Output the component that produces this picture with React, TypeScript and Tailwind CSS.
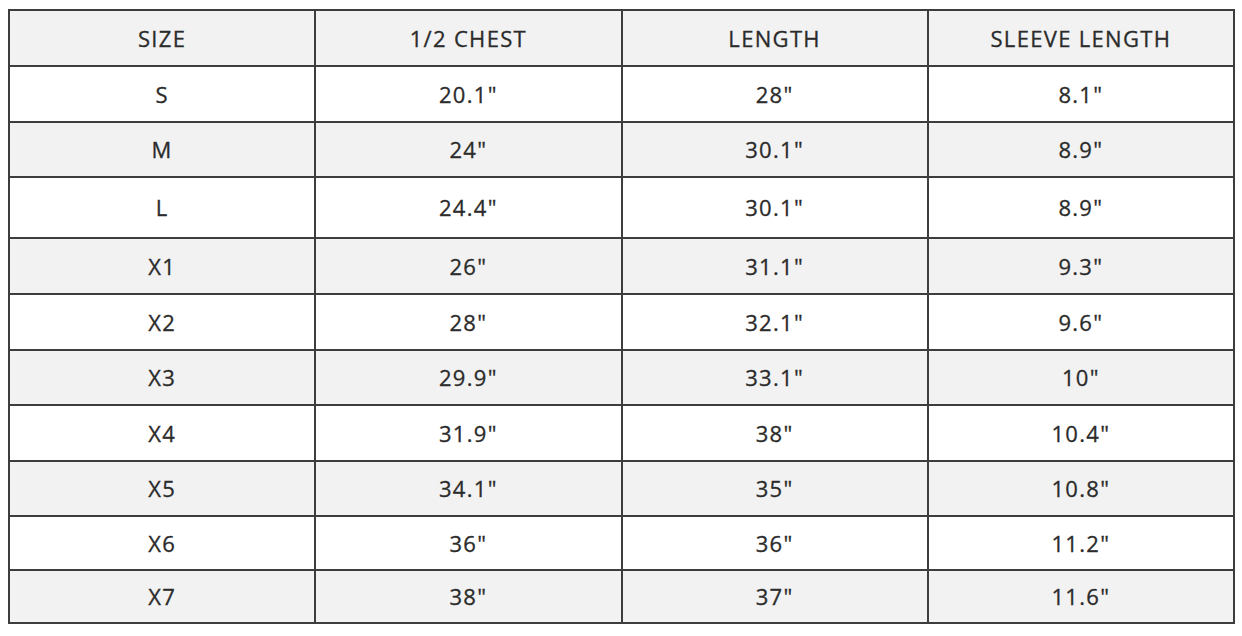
const headers = ["SIZE", "1/2 CHEST", "LENGTH", "SLEEVE LENGTH"];

const rows: { cells: string[]; h: string }[] = [
  { cells: ["S", '20.1"', '28"', '8.1"'], h: "h-[56px]" },
  { cells: ["M", '24"', '30.1"', '8.9"'], h: "h-[55px]" },
  { cells: ["L", '24.4"', '30.1"', '8.9"'], h: "h-[61px]" },
  { cells: ["X1", '26"', '31.1"', '9.3"'], h: "h-[56px]" },
  { cells: ["X2", '28"', '32.1"', '9.6"'], h: "h-[56px]" },
  { cells: ["X3", '29.9"', '33.1"', '10"'], h: "h-[55px]" },
  { cells: ["X4", '31.9"', '38"', '10.4"'], h: "h-[56px]" },
  { cells: ["X5", '34.1"', '35"', '10.8"'], h: "h-[55px]" },
  { cells: ["X6", '36"', '36"', '11.2"'], h: "h-[54px]" },
  { cells: ["X7", '38"', '37"', '11.6"'], h: "h-[53px]" },
];

export default function App() {
  return (
    <div className="min-h-[636px] w-[1242px] bg-white pl-[8px] pt-[9px] font-['Open_Sans','Liberation_Sans',sans-serif] text-[#2b2b2b]">
      <table className="w-[1227px] table-fixed border-collapse border-2 border-[#3d3d3d] text-center text-[22px] tracking-[0.06em] [-webkit-text-stroke:0.3px_#2b2b2b]">
        <thead>
          <tr className="h-[56px] bg-[#f2f2f2]">
            {headers.map((h) => (
              <th key={h} className="border-2 border-[#3d3d3d] font-normal">
                {h}
              </th>
            ))}
          </tr>
        </thead>
        <tbody>
          {rows.map((row, i) => (
            <tr key={row.cells[0]} className={`${row.h} ${i % 2 === 1 ? "bg-[#f2f2f2]" : "bg-white"}`}>
              {row.cells.map((c, j) => (
                <td key={j} className="border-2 border-[#3d3d3d]">
                  {c}
                </td>
              ))}
            </tr>
          ))}
        </tbody>
      </table>
    </div>
  );
}
